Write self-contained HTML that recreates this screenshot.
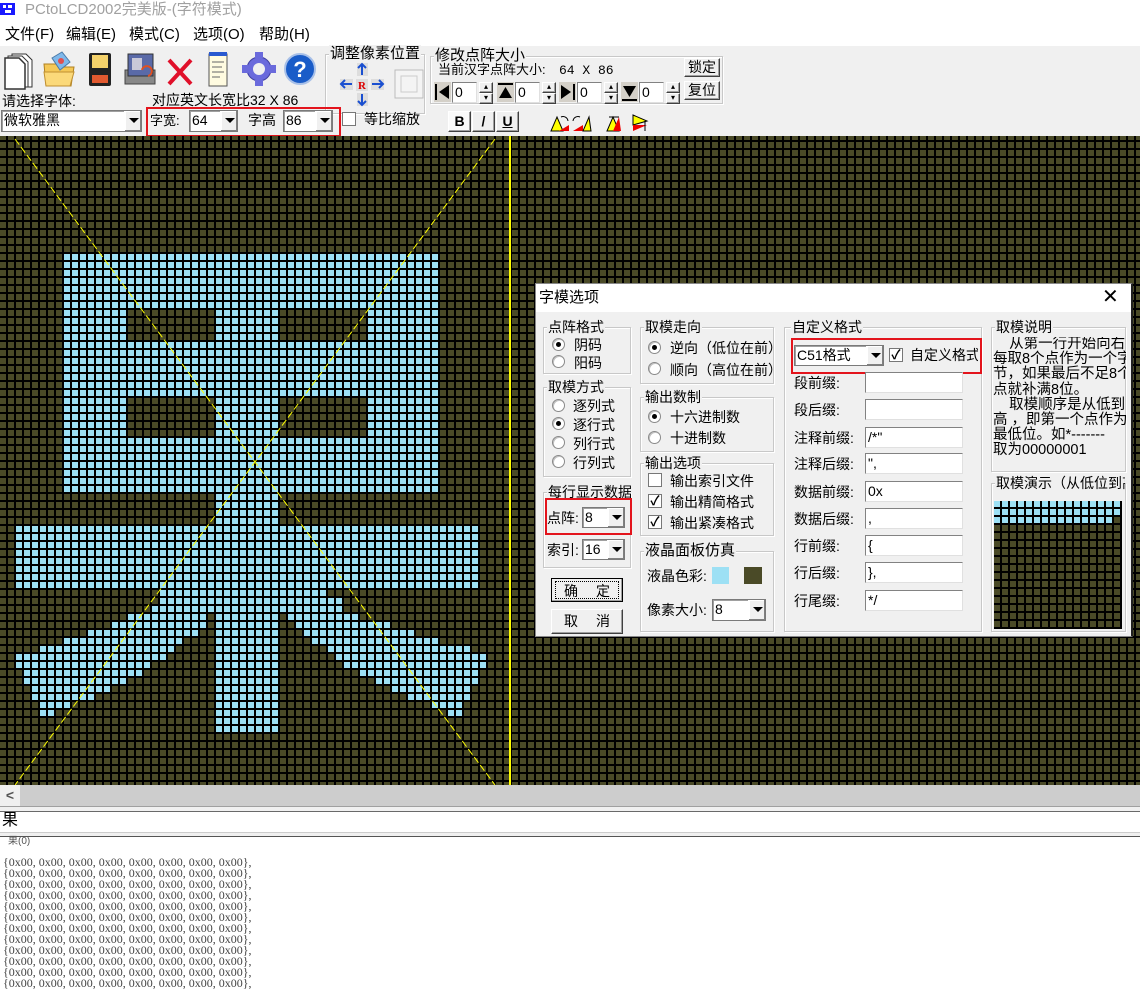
<!DOCTYPE html>
<html><head><meta charset="utf-8"><style>
*{margin:0;padding:0;box-sizing:border-box}
body{width:1140px;height:999px;overflow:hidden;background:#f0f0f0;font-family:"Liberation Sans","Noto Sans CJK SC",sans-serif;font-size:14px;color:#000;position:relative}
.a{position:absolute;white-space:nowrap}
.grp{position:absolute;border:1px solid #c8c8c8;box-shadow:inset 1px 1px 0 #fff,1px 1px 0 #fff}
.gl{position:absolute;top:-10px;left:3px;background:#f0f0f0;font-size:14px;line-height:18px;padding:0 1px;overflow:hidden;white-space:nowrap}
.rad{position:absolute;width:13px;height:13px;border-radius:50%;border:1px solid #8a8a8a;background:#fff;box-shadow:inset 1px 1px 0 #c0c0c0}
.rad.on::after{content:"";position:absolute;left:3px;top:3px;width:5px;height:5px;border-radius:50%;background:#000}
.chk{position:absolute;width:14px;height:14px;border:1px solid #777;background:#fff;font-size:13px;line-height:12px;text-align:center;font-weight:bold}
.cb{position:absolute;background:#fff;border:1px solid #7a7a7a;box-shadow:inset 1px 1px 0 #a0a0a0;font-size:14px;line-height:18px;padding-left:2px;overflow:hidden;white-space:nowrap}
.cb .dd{position:absolute;right:0;top:0;bottom:0;width:17px;background:#f0f0f0;border-left:1px solid #fff;box-shadow:inset -1px -1px 0 #808080,inset 1px 1px 0 #fff}
.cb .dd::after{content:"";position:absolute;left:4px;top:7px;border-left:5px solid transparent;border-right:5px solid transparent;border-top:5px solid #000}
.inp{position:absolute;background:#fff;border:1px solid #828282;border-right-color:#e0e0e0;border-bottom-color:#e0e0e0;font-size:14px;line-height:19px;padding-left:2px;height:21px;width:98px}
.btn{position:absolute;background:#f0f0f0;border:1px solid #fff;border-right-color:#404040;border-bottom-color:#404040;box-shadow:inset -1px -1px 0 #a0a0a0;text-align:center;font-size:14px;white-space:nowrap}
.red{position:absolute;border:2px solid #e3141c}
</style></head><body>
<div class="a" style="left:0;top:0;width:1140px;height:46px;background:#fff"></div>
<svg class="a" style="left:0;top:1px" width="16" height="16"><rect x="0" y="2" width="15" height="12" fill="#1a1aff"/><rect x="3" y="4" width="3" height="3" fill="#fff"/><rect x="8" y="4" width="4" height="3" fill="#fff"/><rect x="5" y="9" width="6" height="3" fill="#fff"/></svg>
<div class="a" style="left:25px;top:0;font-size:15px;line-height:19px;color:#a0a0a0">PCtoLCD2002完美版-(字符模式)</div>
<div class="a" style="left:5px;top:25px;font-size:15px;line-height:19px">文件(F)</div>
<div class="a" style="left:66px;top:25px;font-size:15px;line-height:19px">编辑(E)</div>
<div class="a" style="left:129px;top:25px;font-size:15px;line-height:19px">模式(C)</div>
<div class="a" style="left:193px;top:25px;font-size:15px;line-height:19px">选项(O)</div>
<div class="a" style="left:259px;top:25px;font-size:15px;line-height:19px">帮助(H)</div>
<svg class="a" style="left:0;top:48px" width="330" height="42">
<path d="M12 6h14l6 6v27H12z" fill="#fff" stroke="#333"/><path d="M8 8h14l6 6v25H8z" fill="#fff" stroke="#333"/><path d="M5 10h14l6 6v25H5z" fill="#fff" stroke="#333" stroke-width="1.5"/>
<path d="M44 16h12l3 3h15l-3 19H46z" fill="#f4c857" stroke="#b08020"/><path d="M52 10l10-6 8 10-10 8z" fill="#7fb8ea" stroke="#4a7aa8"/><circle cx="61" cy="13" r="3" fill="#e05050"/><path d="M44 24h30l-4 14H46z" fill="#fbd97a" stroke="#c09030"/>
<rect x="89" y="5" width="22" height="33" rx="2" fill="#222"/><rect x="92" y="7" width="16" height="13" fill="#f5d26b"/><rect x="92" y="27" width="16" height="8" fill="#e25a30"/>
<path d="M125 22h30v14h-30z" fill="#888" stroke="#444"/><rect x="128" y="6" width="25" height="22" fill="#5a6aa8" stroke="#333"/><rect x="132" y="10" width="10" height="12" fill="#c8c8d8"/><path d="M148 28a5 5 0 1 0-6-6" stroke="#e05020" stroke-width="2" fill="none"/>
<path d="M169 12l22 24M191 12l-22 24" stroke="#e0102a" stroke-width="4"/>
<rect x="209" y="6" width="18" height="32" fill="#fffbe0" stroke="#555"/><rect x="209" y="4" width="18" height="4" fill="#2a5ad0"/><path d="M212 14h12M212 19h10M212 24h12M212 29h8" stroke="#666"/>
<circle cx="259" cy="21" r="12" fill="#6a6adc" stroke="#4040a0"/><circle cx="259" cy="21" r="6" fill="#f0f0f0"/><g fill="#6a6adc"><rect x="255" y="4" width="8" height="6"/><rect x="255" y="32" width="8" height="6"/><rect x="242" y="17" width="6" height="8"/><rect x="270" y="17" width="6" height="8"/></g>
<circle cx="300" cy="21" r="15" fill="#1a5cc8" stroke="#a8c0e8" stroke-width="2"/><text x="300" y="29" font-size="22" font-weight="bold" fill="#fff" text-anchor="middle" font-family="Liberation Sans">?</text>
</svg>
<div class="grp" style="left:325px;top:54px;width:100px;height:60px"><div class="gl" style="font-size:15px">调整像素位置</div></div>
<svg class="a" style="left:338px;top:62px" width="90" height="46">
<rect x="19" y="1" width="11" height="13" fill="#ddd"/><path d="M24 13V3M20 6l4-4 4 4" stroke="#1a4fd0" stroke-width="2" fill="none"/>
<rect x="2" y="17" width="13" height="11" fill="#ddd"/><path d="M14 22H4M7 18l-4 4 4 4" stroke="#1a4fd0" stroke-width="2" fill="none"/>
<rect x="18" y="17" width="12" height="12" fill="#ddd"/><text x="24" y="27" font-size="11" fill="#d00" text-anchor="middle" font-family="Liberation Serif" font-weight="bold">R</text>
<rect x="33" y="17" width="13" height="11" fill="#ddd"/><path d="M34 22h10M41 18l4 4-4 4" stroke="#1a4fd0" stroke-width="2" fill="none"/>
<rect x="19" y="31" width="11" height="13" fill="#ddd"/><path d="M24 32v10M20 39l4 4 4-4" stroke="#1a4fd0" stroke-width="2" fill="none"/>
<rect x="57" y="8" width="28" height="28" fill="#f4f4f4" stroke="#bbb"/><rect x="63" y="14" width="16" height="16" fill="none" stroke="#ccc"/>
</svg>
<div class="grp" style="left:430px;top:56px;width:293px;height:48px"><div class="gl" style="font-size:15px">修改点阵大小</div></div>
<div class="a" style="left:438px;top:62px;font-size:13px;line-height:16px">当前汉字点阵大小:</div>
<div class="a" style="left:559px;top:63px;font-size:13px;line-height:16px;font-family:'Liberation Mono',monospace">64 X 86</div>
<div class="btn" style="left:684px;top:58px;width:36px;height:19px;line-height:16px">锁定</div>
<div class="btn" style="left:684px;top:81px;width:36px;height:19px;line-height:16px">复位</div>
<svg class="a" style="left:434px;top:81px" width="250" height="24">
<g><rect x="0" y="1" width="17" height="20" fill="#d4d0c8"/><path d="M2 3v16" stroke="#000" stroke-width="2"/><path d="M15 4v14l-10-7z" fill="#000"/></g>
<g transform="translate(63,0)"><rect x="0" y="1" width="17" height="20" fill="#d4d0c8"/><path d="M1 3h15" stroke="#000" stroke-width="2"/><path d="M2 17h13l-6.5-11z" fill="#000"/></g>
<g transform="translate(125,0)"><rect x="0" y="1" width="17" height="20" fill="#d4d0c8"/><path d="M15 3v16" stroke="#000" stroke-width="2"/><path d="M2 4v14l10-7z" fill="#000"/></g>
<g transform="translate(187,0)"><rect x="0" y="1" width="17" height="20" fill="#d4d0c8"/><path d="M1 19h15" stroke="#000" stroke-width="2"/><path d="M2 5h13l-6.5 11z" fill="#000"/></g>
</svg>
<div class="inp" style="left:452px;top:82px;width:25px;height:21px">0</div>
<div class="inp" style="left:515px;top:82px;width:25px;height:21px">0</div>
<div class="inp" style="left:577px;top:82px;width:25px;height:21px">0</div>
<div class="inp" style="left:639px;top:82px;width:25px;height:21px">0</div>
<div class="btn" style="left:479px;top:82px;width:14px;height:11px;font-size:8px;line-height:8px">▴</div><div class="btn" style="left:479px;top:93px;width:14px;height:11px;font-size:8px;line-height:8px">▾</div>
<div class="btn" style="left:542px;top:82px;width:14px;height:11px;font-size:8px;line-height:8px">▴</div><div class="btn" style="left:542px;top:93px;width:14px;height:11px;font-size:8px;line-height:8px">▾</div>
<div class="btn" style="left:604px;top:82px;width:14px;height:11px;font-size:8px;line-height:8px">▴</div><div class="btn" style="left:604px;top:93px;width:14px;height:11px;font-size:8px;line-height:8px">▾</div>
<div class="btn" style="left:666px;top:82px;width:14px;height:11px;font-size:8px;line-height:8px">▴</div><div class="btn" style="left:666px;top:93px;width:14px;height:11px;font-size:8px;line-height:8px">▾</div>
<div class="a" style="left:2px;top:92px;font-size:14px;line-height:18px">请选择字体:</div>
<div class="a" style="left:152px;top:91px;font-size:14px;line-height:18px">对应英文长宽比32 X 86</div>
<div class="cb" style="left:1px;top:110px;width:141px;height:22px">微软雅黑<div class="dd"></div></div>
<div class="a" style="left:150px;top:110px;font-size:13px">字宽:</div>
<div class="cb" style="left:189px;top:110px;width:49px;height:22px">64<div class="dd"></div></div>
<div class="a" style="left:248px;top:110px;font-size:14px">字高</div>
<div class="cb" style="left:283px;top:110px;width:50px;height:22px">86<div class="dd"></div></div>
<div class="red" style="left:146px;top:107px;width:195px;height:30px"></div>
<div class="chk" style="left:342px;top:112px;width:14px;height:14px"></div>
<div class="a" style="left:364px;top:109px;font-size:14px">等比缩放</div>
<div class="btn" style="left:448px;top:111px;width:23px;height:21px;font-weight:bold;line-height:19px;background:#fafafa">B</div>
<div class="btn" style="left:472px;top:111px;width:23px;height:21px;font-weight:bold;line-height:19px">/</div>
<div class="btn" style="left:496px;top:111px;width:23px;height:21px;font-weight:bold;line-height:19px;text-decoration:underline">U</div>
<svg class="a" style="left:549px;top:111px" width="100" height="22">
<path d="M2 20l6-14 6 14z" fill="#ff0" stroke="#000"/><path d="M10 20l10-6v6z" fill="#e00"/><path d="M12 6a5 5 0 0 1 7 4" stroke="#000" fill="none"/>
<path d="M24 20l10-6v6z" fill="#e00"/><path d="M34 20l6-14 2 14z" fill="#ff0" stroke="#000"/><path d="M24 10a5 5 0 0 1 7-4" stroke="#000" fill="none"/>
<path d="M58 20l6-14 6 14z" fill="#ff0" stroke="#000"/><path d="M64 20l6-14 2 14z" fill="#e00"/><path d="M60 6h10" stroke="#000"/>
<path d="M84 4l14 6-14 4z" fill="#ff0" stroke="#000"/><path d="M84 14l14 0-14 6z" fill="#e00"/><path d="M96 10v10" stroke="#000"/>
</svg>
<div class="a" style="left:0;top:136px;width:1140px;height:649px;overflow:hidden">
<svg style="position:absolute;left:0;top:-2px" width="1140" height="660">
<defs><pattern id="g" width="8" height="8" patternUnits="userSpaceOnUse"><rect x="6" y="0" width="2" height="8" fill="#000"/><rect x="0" y="6" width="8" height="2" fill="#000"/></pattern></defs>
<rect width="1140" height="660" fill="#4a4a27"/>
<g fill="#9de0f4">
<rect x="64" y="120" width="376" height="240"/>
<rect x="216" y="360" width="64" height="240"/>
<rect x="16" y="392" width="464" height="64"/>
<rect x="160" y="456" width="168" height="8"/>
<rect x="160" y="464" width="184" height="8"/>
<rect x="152" y="472" width="192" height="8"/>
<rect x="128" y="480" width="80" height="8"/><rect x="288" y="480" width="72" height="8"/>
<rect x="112" y="488" width="96" height="8"/><rect x="296" y="488" width="96" height="8"/>
<rect x="88" y="496" width="112" height="8"/><rect x="304" y="496" width="112" height="8"/>
<rect x="64" y="504" width="120" height="8"/><rect x="312" y="504" width="128" height="8"/>
<rect x="40" y="512" width="136" height="8"/><rect x="328" y="512" width="144" height="8"/>
<rect x="16" y="520" width="152" height="8"/><rect x="336" y="520" width="152" height="8"/>
<rect x="16" y="528" width="136" height="8"/><rect x="344" y="528" width="144" height="8"/>
<rect x="24" y="536" width="120" height="8"/><rect x="360" y="536" width="120" height="8"/>
<rect x="24" y="544" width="104" height="8"/><rect x="376" y="544" width="104" height="8"/>
<rect x="32" y="552" width="80" height="8"/><rect x="392" y="552" width="80" height="8"/>
<rect x="32" y="560" width="64" height="8"/><rect x="408" y="560" width="64" height="8"/>
<rect x="40" y="568" width="32" height="8"/><rect x="432" y="568" width="32" height="8"/>
<rect x="40" y="576" width="16" height="8"/><rect x="448" y="576" width="16" height="8"/>
</g>
<g fill="#4a4a27">
<rect x="128" y="176" width="88" height="32"/><rect x="280" y="176" width="88" height="32"/>
<rect x="128" y="264" width="88" height="40"/><rect x="280" y="264" width="88" height="40"/>
</g>
<rect width="1140" height="660" fill="url(#g)"/>
<path d="M15 5L495 651M495 5L15 651" stroke="#ffff00" stroke-width="1" stroke-dasharray="7 3"/>
<rect x="509" y="0" width="2" height="660" fill="#ffff00"/>
</svg></div>
<div class="a" style="left:0;top:785px;width:1140px;height:21px;background:#cdcdcd"></div>
<div class="a" style="left:0;top:785px;width:20px;height:21px;background:#f0f0f0;font-size:14px;line-height:21px;text-align:center;color:#555;font-weight:bold">&lt;</div>
<div class="a" style="left:0;top:806px;width:1140px;height:6px;background:#f0f0f0;border-top:1px solid #a0a0a0;border-bottom:1px solid #696969"></div>
<div class="a" style="left:0;top:812px;width:1140px;height:20px;background:#fff;font-size:16px;line-height:18px;padding-left:2px">果</div>
<div class="a" style="left:0;top:832px;width:1140px;height:5px;background:#f0f0f0;border-top:1px solid #ccc;border-bottom:1px solid #555"></div>
<div class="a" style="left:0;top:837px;width:1140px;height:162px;background:#fff"></div>
<div class="a" style="left:8px;top:836px;font-size:10px;line-height:12px;color:#555">果(0)</div>
<div class="a" style="left:3px;top:857px;font-family:'Liberation Serif',serif;font-size:12px;line-height:11px;color:#444">{0x00, 0x00, 0x00, 0x00, 0x00, 0x00, 0x00, 0x00},<br>{0x00, 0x00, 0x00, 0x00, 0x00, 0x00, 0x00, 0x00},<br>{0x00, 0x00, 0x00, 0x00, 0x00, 0x00, 0x00, 0x00},<br>{0x00, 0x00, 0x00, 0x00, 0x00, 0x00, 0x00, 0x00},<br>{0x00, 0x00, 0x00, 0x00, 0x00, 0x00, 0x00, 0x00},<br>{0x00, 0x00, 0x00, 0x00, 0x00, 0x00, 0x00, 0x00},<br>{0x00, 0x00, 0x00, 0x00, 0x00, 0x00, 0x00, 0x00},<br>{0x00, 0x00, 0x00, 0x00, 0x00, 0x00, 0x00, 0x00},<br>{0x00, 0x00, 0x00, 0x00, 0x00, 0x00, 0x00, 0x00},<br>{0x00, 0x00, 0x00, 0x00, 0x00, 0x00, 0x00, 0x00},<br>{0x00, 0x00, 0x00, 0x00, 0x00, 0x00, 0x00, 0x00},<br>{0x00, 0x00, 0x00, 0x00, 0x00, 0x00, 0x00, 0x00},</div>
<div class="a" style="left:535px;top:283px;width:598px;height:354px;background:#f0f0f0;border:1px solid #888;border-right:2px solid #222"></div>
<div class="a" style="left:536px;top:284px;width:595px;height:28px;background:#fff"></div>
<div class="a" style="left:539px;top:288px;font-size:15px;line-height:20px">字模选项</div>
<div class="a" style="left:1102px;top:284px;font-size:20px;line-height:26px;font-weight:300">✕</div>
<div class="grp" style="left:543px;top:327px;width:88px;height:47px"><div class="gl">点阵格式</div></div>
<div class="rad on" style="left:552px;top:338px"></div><div class="a" style="left:574px;top:335px">阴码</div>
<div class="rad" style="left:552px;top:355px"></div><div class="a" style="left:574px;top:353px">阳码</div>
<div class="grp" style="left:543px;top:387px;width:88px;height:90px"><div class="gl">取模方式</div></div>
<div class="rad" style="left:552px;top:399px"></div><div class="a" style="left:573px;top:396px">逐列式</div>
<div class="rad on" style="left:552px;top:417px"></div><div class="a" style="left:573px;top:415px">逐行式</div>
<div class="rad" style="left:552px;top:436px"></div><div class="a" style="left:573px;top:434px">列行式</div>
<div class="rad" style="left:552px;top:455px"></div><div class="a" style="left:573px;top:453px">行列式</div>
<div class="grp" style="left:543px;top:492px;width:88px;height:76px"><div class="gl" style="width:84px">每行显示数据</div></div>
<div class="a" style="left:547px;top:508px">点阵:</div>
<div class="cb" style="left:582px;top:507px;width:43px;height:21px">8<div class="dd"></div></div>
<div class="a" style="left:547px;top:540px">索引:</div>
<div class="cb" style="left:582px;top:539px;width:43px;height:21px">16<div class="dd"></div></div>
<div class="red" style="left:545px;top:498px;width:87px;height:37px"></div>
<div class="btn" style="left:551px;top:578px;width:72px;height:24px;line-height:18px;border-color:#000;padding:2px 3px"><div style="border:1px dotted #000;height:18px;display:flex;justify-content:space-between;padding:0 8px"><span>确</span><span>定</span></div></div>
<div class="btn" style="left:551px;top:609px;width:72px;height:25px;line-height:23px;display:flex;justify-content:space-between;padding:0 12px"><span>取</span><span>消</span></div>
<div class="grp" style="left:640px;top:327px;width:134px;height:57px"><div class="gl">取模走向</div></div>
<div class="rad on" style="left:648px;top:341px"></div><div class="a" style="left:670px;top:338px;width:104px;overflow:hidden">逆向（低位在前）</div>
<div class="rad" style="left:648px;top:362px"></div><div class="a" style="left:670px;top:360px;width:104px;overflow:hidden">顺向（高位在前）</div>
<div class="grp" style="left:640px;top:397px;width:134px;height:55px"><div class="gl">输出数制</div></div>
<div class="rad on" style="left:648px;top:410px"></div><div class="a" style="left:670px;top:407px">十六进制数</div>
<div class="rad" style="left:648px;top:431px"></div><div class="a" style="left:670px;top:428px">十进制数</div>
<div class="grp" style="left:640px;top:463px;width:134px;height:73px"><div class="gl">输出选项</div></div>
<div class="chk" style="left:648px;top:473px"></div><div class="a" style="left:670px;top:471px">输出索引文件</div>
<div class="chk" style="left:648px;top:494px">✓</div><div class="a" style="left:670px;top:492px">输出精简格式</div>
<div class="chk" style="left:648px;top:515px">✓</div><div class="a" style="left:670px;top:513px;width:84px;overflow:hidden">输出紧凑格式</div>
<div class="grp" style="left:640px;top:551px;width:134px;height:81px"><div class="gl" style="font-size:15px">液晶面板仿真</div></div>
<div class="a" style="left:647px;top:566px">液晶色彩:</div>
<div class="a" style="left:712px;top:567px;width:17px;height:17px;background:#9de0f4"></div>
<div class="a" style="left:744px;top:567px;width:18px;height:17px;background:#4a4a27"></div>
<div class="a" style="left:647px;top:600px">像素大小:</div>
<div class="cb" style="left:712px;top:599px;width:54px;height:22px">8<div class="dd"></div></div>
<div class="grp" style="left:784px;top:327px;width:198px;height:305px"><div class="gl" style="left:6px">自定义格式</div></div>
<div class="cb" style="left:794px;top:345px;width:90px;height:21px">C51格式<div class="dd"></div></div>
<div class="chk" style="left:889px;top:348px">✓</div>
<div class="a" style="left:910px;top:345px;width:68px;overflow:hidden">自定义格式</div>
<div class="red" style="left:791px;top:338px;width:191px;height:36px"></div>
<div class="a" style="left:794px;top:373px">段前缀:</div><div class="inp" style="left:865px;top:372px"></div>
<div class="a" style="left:794px;top:400px">段后缀:</div><div class="inp" style="left:865px;top:399px"></div>
<div class="a" style="left:794px;top:428px">注释前缀:</div><div class="inp" style="left:865px;top:427px">/*"</div>
<div class="a" style="left:794px;top:454px">注释后缀:</div><div class="inp" style="left:865px;top:453px">",</div>
<div class="a" style="left:794px;top:482px">数据前缀:</div><div class="inp" style="left:865px;top:481px">0x</div>
<div class="a" style="left:794px;top:509px">数据后缀:</div><div class="inp" style="left:865px;top:508px">,</div>
<div class="a" style="left:794px;top:536px">行前缀:</div><div class="inp" style="left:865px;top:535px">{</div>
<div class="a" style="left:794px;top:563px">行后缀:</div><div class="inp" style="left:865px;top:562px">},</div>
<div class="a" style="left:794px;top:591px">行尾缀:</div><div class="inp" style="left:865px;top:590px">*/</div>
<div class="grp" style="left:991px;top:327px;width:135px;height:145px"><div class="gl">取模说明</div></div>
<div class="a" style="left:993px;top:337px;width:133px;overflow:hidden;font-size:14.5px;line-height:15.2px;white-space:pre">    从第一行开始向右
每取8个点作为一个字
节，如果最后不足8个
点就补满8位。
    取模顺序是从低到
高 ，即第一个点作为
最低位。如*-------
取为00000001</div>
<div class="grp" style="left:991px;top:483px;width:135px;height:149px"><div class="gl" style="width:130px">取模演示（从低位到高位）</div></div>
<svg class="a" style="left:994px;top:501px" width="128" height="128">
<defs><pattern id="g2" width="8" height="8" patternUnits="userSpaceOnUse"><rect x="6" width="2" height="8" fill="#000"/><rect y="6" width="8" height="2" fill="#000"/></pattern></defs>
<rect width="128" height="128" fill="#4a4a27"/><rect width="128" height="16" fill="#9de0f4"/><rect y="16" width="120" height="8" fill="#9de0f4"/>
<rect width="128" height="128" fill="url(#g2)"/></svg>
</body></html>
